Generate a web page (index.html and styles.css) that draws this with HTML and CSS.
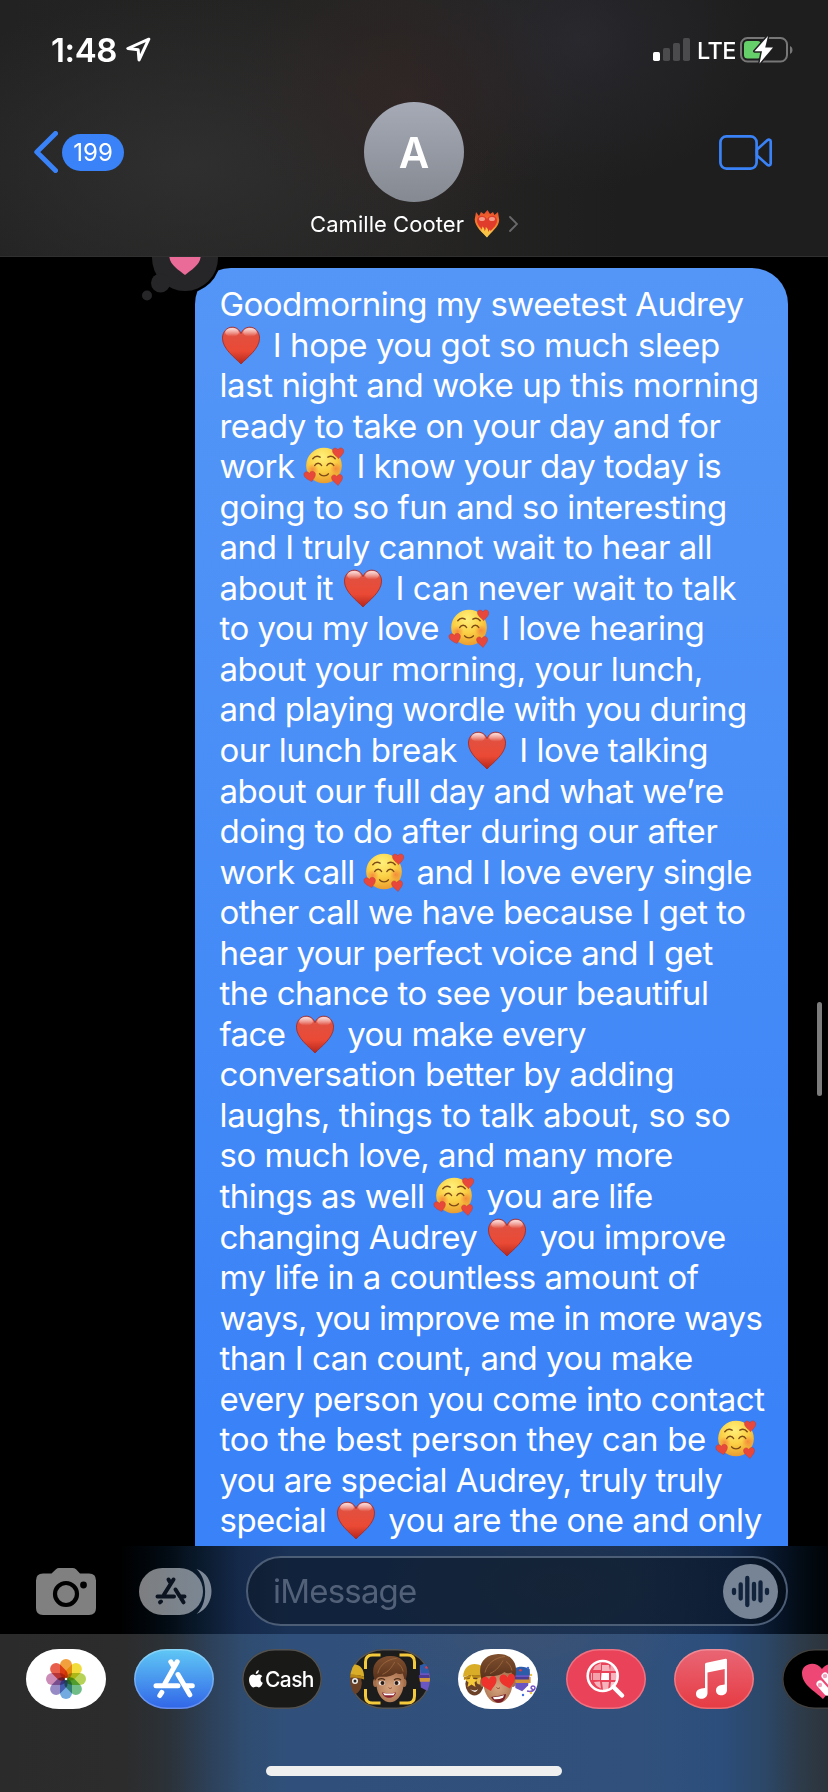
FILE: index.html
```html
<!DOCTYPE html>
<html lang="en">
<head>
<meta charset="utf-8">
<title>Messages</title>
<link rel="stylesheet" href="styles.css">
</head>
<body>
<svg class="defs" aria-hidden="true">
  <defs>
    <linearGradient id="heartFill" x1="0" y1="0" x2="0" y2="1">
      <stop offset="0" stop-color="#f08a80"/><stop offset=".22" stop-color="#e2503f"/><stop offset=".65" stop-color="#ea4a35"/><stop offset="1" stop-color="#b5261b"/>
    </linearGradient>
    <linearGradient id="shine" x1="0" y1="0" x2="0" y2="1"><stop offset="0" stop-color="#fff" stop-opacity=".75"/><stop offset="1" stop-color="#fff" stop-opacity="0"/></linearGradient>
    <radialGradient id="faceFill" cx=".45" cy=".25" r=".8">
      <stop offset="0" stop-color="#fff07a"/><stop offset=".5" stop-color="#fbd045"/><stop offset="1" stop-color="#e9952c"/>
    </radialGradient>
    <radialGradient id="blush"><stop offset="0" stop-color="#f4683a" stop-opacity=".6"/><stop offset="1" stop-color="#f4683a" stop-opacity="0"/></radialGradient>
    <linearGradient id="flame" x1="0" y1="0" x2="0" y2="1"><stop offset="0" stop-color="#e8472c"/><stop offset=".6" stop-color="#f58a2d"/><stop offset="1" stop-color="#fde063"/></linearGradient>
    <linearGradient id="hair" x1="0" y1="0" x2="0" y2="1"><stop offset="0" stop-color="#80502f"/><stop offset="1" stop-color="#56301a"/></linearGradient>
    <radialGradient id="skin" cx=".5" cy=".5" r=".6"><stop offset="0" stop-color="#d9a581"/><stop offset="1" stop-color="#a8714d"/></radialGradient>
    <symbol id="heart" viewBox="0 0 40 40">
      <path d="M20 39C14 32.500 1 23.500 1 12.500 1 6 5.500 1.200 11 1.200c4.300 0 7.500 2.600 9 6.600 1.500-4 4.700-6.600 9-6.600 5.500 0 10 4.800 10 11.300C39 23.500 26 32.500 20 39z" fill="url(#heartFill)" stroke="#a52a24" stroke-width=".9"/>
      <ellipse cx="10.800" cy="6.500" rx="7" ry="4.500" fill="url(#shine)"/>
      <ellipse cx="29.200" cy="6.500" rx="7" ry="4.500" fill="url(#shine)"/>
    </symbol>
    <symbol id="love" viewBox="0 0 42 40">
      <circle cx="21" cy="19" r="18.300" fill="url(#faceFill)"/>
      <circle cx="9.500" cy="23" r="6" fill="url(#blush)"/><circle cx="33" cy="22" r="6" fill="url(#blush)"/>
      <path d="M9.500 12c2-2.500 5-3 7.500-1.500M25 10.500c2.500-1.500 5.500-1 7.500 1.500M11.500 19c1.500-3 5.500-3 7 0M24 19c1.500-3 5.500-3 7 0M16.500 27.500c2 2.800 7 2.800 9 0" fill="none" stroke="#7c4a17" stroke-width="1.500" stroke-linecap="round"/>
      <g fill="#e8483c" stroke="#b8332b" stroke-width=".4">
        <path d="M36 12C33 9 29.500 7 29.700 3.700 30 .5 34 .3 35.200 3 36.800-.5 41.500.800 41.200 4.300 41 7.500 38 9.500 36 12z"/>
        <path d="M8.500 35.500C5 33.500.500 32 .400 28.300.500 25 4.500 24.500 6 27.200 7 23.700 12 24.500 12.200 28 12.300 31 9.800 33 8.500 35.500z"/>
        <path d="M35.500 39.500C32.500 36.500 28.700 34.500 28.700 31.300 29 28 32.700 27.700 34.200 30.500 35.500 27 40 27.700 40 31.300 40 34.500 37 36.700 35.500 39.500z"/>
      </g>
    </symbol>
    <symbol id="store" viewBox="0 0 80 60">
      <g fill="none" stroke="currentColor" stroke-width="5" stroke-linecap="round">
        <path d="M43.200 12.800 31 34.500M36.800 12.800l3 5"/>
        <path d="M22 36.700h22M52 36.700h6.300M27.800 43.300l-2 3.200"/>
        <path d="M44 25.500 55.800 45.800"/>
      </g>
    </symbol>
    <symbol id="friendYellow" viewBox="0 0 26 34">
      <ellipse cx="13" cy="21" rx="9.500" ry="12" fill="#6b4228"/>
      <path d="M1 14C2 2 10-1 17 1c6 2 8 7 8 13-7-3-17-3-24 0z" fill="#d9ad28"/>
      <path d="M2 14c7-3 16-3 23 0v3c-7-3-16-3-23 0z" fill="#b98917"/>
    </symbol>
    <symbol id="friendBlue" viewBox="0 0 26 30">
      <path d="M3 2h17l1 7-2 13-7 7-8-4-1-14z" fill="#6a56c2"/>
      <path d="M3 2C7-1 17-1 21 3v7H4z" fill="#2c5ba8"/><circle cx="10" cy="4" r="1.500" fill="#e43b43"/>
      <path d="M2 12h20v7H3z" fill="#d1953b"/><path d="M2 12h18v3H2z" fill="#4d3a93"/>
    </symbol>
    <symbol id="boy" viewBox="0 0 40 52">
      <ellipse cx="4.500" cy="29" rx="2.500" ry="4.500" fill="#a66f4c"/><ellipse cx="35" cy="29" rx="2.500" ry="4.500" fill="#a66f4c"/>
      <path d="M5 18c0 15 1 21 6 27 5 6 13 6 18 0 5-6 6-12 6-27z" fill="url(#skin)"/>
      <path d="M4 27C-2 10 7 1 20 .500 33 0 42 10 36.500 26c-1.500-2-2-4-3-7-3 1-5 1-7-.500-4 3.500-11 4.500-17 4-2 0-4 1.500-5.500 4.500z" fill="url(#hair)"/>
      <path d="M7 19C9 10 17 4 27 3M12 20c7-3 10-8 13-13M28 8c3 2 5 5 6 9" fill="none" stroke="#9c6840" stroke-width=".9"/>
      <path d="M18.500 34c1 1.300 2.500 1.300 3.500 0" fill="none" stroke="#85492e" stroke-width="1"/>
    </symbol>
  </defs>
</svg>

<header class="header">
  <div class="status">
    <span class="time">1:48</span>
    <svg class="locate" viewBox="0 0 25 25"><path d="M22.800 2.200 1.800 11.500 12.200 12.800 13 23z" fill="none" stroke="#fff" stroke-width="3" stroke-linejoin="round"/></svg>
    <div class="status-right">
      <svg class="signal" viewBox="0 0 37 23"><rect y="14" width="7" height="9" rx="1.700" fill="#fff"/><g fill="#4b4b4e"><rect x="10" y="10" width="7" height="13" rx="1.700"/><rect x="20" y="5" width="7" height="18" rx="1.700"/><rect x="30" width="7" height="23" rx="1.700"/></g></svg>
      <span class="lte">LTE</span>
      <svg class="battery" viewBox="0 0 54 28">
        <rect x="1" y="2" width="46" height="23.500" rx="6.500" fill="none" stroke="#777" stroke-width="2"/>
        <path d="M50 10v8c3.300-1.200 3.300-6.800 0-8z" fill="#777"/>
        <rect x="4" y="5" width="17" height="17.500" rx="3.500" fill="#65cf69"/>
        <path d="M28 0 14.500 15.200h7.500L19.500 27.500 33 11.500h-7.800z" fill="#fff" stroke="#202022" stroke-width="3" stroke-linejoin="round" paint-order="stroke"/>
      </svg>
    </div>
  </div>
  <div class="nav">
    <div class="back">
      <svg class="back-arrow" viewBox="0 0 24 42"><path d="M21.500 2.500 2.800 21 21.500 39.500" fill="none" stroke="#3a82f7" stroke-width="5" stroke-linecap="round" stroke-linejoin="round"/></svg>
      <span class="count">199</span>
    </div>
    <div class="contact">
      <div class="avatar">A</div>
      <div class="name"><span>Camille Cooter</span>
        <svg class="fire" viewBox="0 0 26 28"><path d="M13 27.500C9 23 1 17 .700 9.500L2 2l3 4 2-4 3 2 3.500-4L16 4l3-2 1.500 3L24 2l1.200 8C25 17 17 22 13 27.500z" fill="url(#flame)"/><path d="M13 24C9 20 3 16 3 10.500 3 5 10 4 13 9c3-5 10-4 10 1.500C23 16 17 20 13 24z" fill="#df3c2b"/><ellipse cx="8" cy="9" rx="3" ry="2" fill="#f39a86"/><ellipse cx="18" cy="9" rx="3" ry="2" fill="#f39a86"/><path d="M7 21c1-1.500 1.500-3 1.200-4.500 1.800 1 2.300 2.500 2.300 4.500 1-1 1.500-2.500 1.200-4 2 1.200 2.800 3 2.300 5l2-2.500.5 2-3.500 5z" fill="#fbc343"/></svg>
        <svg class="chev" viewBox="0 0 9 16"><path d="M1 1l7 7-7 7" fill="none" stroke="#69696b" stroke-width="1.800" stroke-linecap="round"/></svg>
      </div>
    </div>
    <svg class="video" viewBox="0 0 54 36"><g fill="none" stroke="#3a82f7" stroke-width="2.700" stroke-linejoin="round"><rect x="1.400" y="1.400" width="36.200" height="32.200" rx="6"/><path d="M38 14.500 48.300 5.300c1.500-1.200 3.400-.700 3.400 1.200v22c0 1.900-1.900 2.400-3.400 1.200L38 20.500z"/></g></svg>
  </div>
</header>

<main class="chat">
  <div class="bubble">
    <div class="line" data-w="524">Goodmorning my sweetest Audrey</div>
    <div class="line" data-w="500.3"><svg class="emo"><use href="#heart"/></svg> I hope you got so much sleep</div>
    <div class="line" data-w="539.3">last night and woke up this morning</div>
    <div class="line" data-w="501">ready to take on your day and for</div>
    <div class="line" data-w="501.7">work <svg class="emo"><use href="#love"/></svg> I know your day today is</div>
    <div class="line" data-w="507.3">going to so fun and so interesting</div>
    <div class="line" data-w="492.5">and I truly cannot wait to hear all</div>
    <div class="line" data-w="516.8">about it <svg class="emo"><use href="#heart"/></svg> I can never wait to talk</div>
    <div class="line" data-w="484.7">to you my love <svg class="emo"><use href="#love"/></svg> I love hearing</div>
    <div class="line" data-w="483.3">about your morning, your lunch,</div>
    <div class="line" data-w="527.3">and playing wordle with you during</div>
    <div class="line" data-w="488.7">our lunch break <svg class="emo"><use href="#heart"/></svg> I love talking</div>
    <div class="line" data-w="504.3">about our full day and what we’re</div>
    <div class="line" data-w="498">doing to do after during our after</div>
    <div class="line" data-w="532.3">work call <svg class="emo"><use href="#love"/></svg> and I love every single</div>
    <div class="line" data-w="526">other call we have because I get to</div>
    <div class="line" data-w="493.3">hear your perfect voice and I get</div>
    <div class="line" data-w="489">the chance to see your beautiful</div>
    <div class="line" data-w="366.5">face <svg class="emo"><use href="#heart"/></svg> you make every</div>
    <div class="line" data-w="454.5">conversation better by adding</div>
    <div class="line" data-w="511">laughs, things to talk about, so so</div>
    <div class="line" data-w="453.3">so much love, and many more</div>
    <div class="line" data-w="433.3">things as well <svg class="emo"><use href="#love"/></svg> you are life</div>
    <div class="line" data-w="506.3">changing Audrey <svg class="emo"><use href="#heart"/></svg> you improve</div>
    <div class="line" data-w="479">my life in a countless amount of</div>
    <div class="line" data-w="542.7">ways, you improve me in more ways</div>
    <div class="line" data-w="473.3">than I can count, and you make</div>
    <div class="line" data-w="545">every person you come into contact</div>
    <div class="line" data-w="537.5">too the best person they can be <svg class="emo"><use href="#love"/></svg></div>
    <div class="line" data-w="502.7">you are special Audrey, truly truly</div>
    <div class="line" data-w="542.3">special <svg class="emo"><use href="#heart"/></svg> you are the one and only</div>
  </div>
  <svg class="tapback" viewBox="0 0 80 46">
    <circle cx="45" cy="1" r="35.500" fill="#000"/>
    <g fill="#262628"><circle cx="45" cy="1" r="33"/><circle cx="20.500" cy="26" r="9.500"/><circle cx="7" cy="38.500" r="5"/></g>
    <path d="M29.300-1C29.500 8 39 13 45 18 51 13 60.500 8 60.700-1z" fill="#ea6a98"/>
  </svg>
  <div class="scrollbar"></div>
</main>

<section class="compose">
  <svg class="camera" viewBox="0 0 60 47"><path d="M7 5.500h8.500L20 1.300Q21.300 0 23 0h13.500Q38.500 0 40 1.300L44 5.500H53q7 0 7 7V40q0 7-7 7H7q-7 0-7-7V12.500q0-7 7-7z" fill="#808080"/><circle cx="30" cy="26" r="11" fill="none" stroke="#000" stroke-width="4.200"/><circle cx="47.500" cy="17" r="3.400" fill="#000"/></svg>
  <svg class="apps-toggle" viewBox="0 0 73 47">
    <defs><linearGradient id="pill"><stop offset="0" stop-color="#7d7e80"/><stop offset="1" stop-color="#7b8794"/></linearGradient></defs>
    <path d="M57.500 1C77 7 78 38 57.500 46 69 36 69 11 57.500 1z" fill="#7e8998"/>
    <rect width="64" height="47" rx="23.500" fill="url(#pill)"/>
    <g fill="none" stroke="#0b1420" stroke-width="4" stroke-linecap="round"><path d="M34.500 11.500 25 26.500M29.500 11.500l2 3.500M18.500 28.500H35M41 28.500h4.500M22 33.500l-1 .800M36.500 21.500l8 12.800"/></g>
  </svg>
  <div class="field"><span>iMessage</span>
    <svg class="voice" viewBox="0 0 55 55"><circle cx="27.500" cy="27.500" r="27.500" fill="#778496"/><path d="M11 26v3M17.700 20.500v14M24.300 14v27M31 20v15M37.500 18.500v18M44 26v3" fill="none" stroke="#12233c" stroke-width="4.300" stroke-linecap="round"/></svg>
  </div>
</section>

<footer class="drawer">
  <div class="strip">
    <div class="app white"><svg viewBox="0 0 80 60"><g class="petals">
      <rect x="34" y="10" width="12" height="20" rx="6" fill="#f2a03d"/>
      <rect x="34" y="10" width="12" height="20" rx="6" fill="#f1dc3b" transform="rotate(45 40 30)"/>
      <rect x="34" y="10" width="12" height="20" rx="6" fill="#b6d357" transform="rotate(90 40 30)"/>
      <rect x="34" y="10" width="12" height="20" rx="6" fill="#70bd87" transform="rotate(135 40 30)"/>
      <rect x="34" y="10" width="12" height="20" rx="6" fill="#73abe1" transform="rotate(180 40 30)"/>
      <rect x="34" y="10" width="12" height="20" rx="6" fill="#978bc5" transform="rotate(225 40 30)"/>
      <rect x="34" y="10" width="12" height="20" rx="6" fill="#cb8db8" transform="rotate(270 40 30)"/>
      <rect x="34" y="10" width="12" height="20" rx="6" fill="#e8604c" transform="rotate(315 40 30)"/>
    </g><circle cx="40" cy="30" r="1.300" fill="#fff"/></svg></div>
    <div class="app store"><svg><use href="#store"/></svg></div>
    <div class="app cash"><svg class="apple" viewBox="0 0 14 18"><path d="M10 4.500c-1.500 0-2 .800-3 .800s-1.800-.800-3.200-.800C1.500 4.600 0 6.800 0 9.700 0 13.500 2.500 17.500 4.400 17.500c1.100 0 1.500-.700 2.800-.700s1.600.700 2.700.700c1.700 0 3.200-2.500 3.900-4.700C10.800 11.500 11 7.500 13.300 6.300 12.500 5.100 11.200 4.500 10 4.500zM9.800 0C8 .300 6.500 2 6.800 4 8.700 4 10 2 9.800 0z" fill="#fff"/></svg><span>Cash</span></div>
    <div class="app dark"><svg viewBox="0 0 80 60">
      <use href="#friendYellow" x="-9" y="13" width="24" height="35"/><circle cx="5" cy="32" r="3" fill="#eee"/><circle cx="5" cy="32" r="1.500" fill="#222"/>
      <use href="#friendBlue" x="67" y="13" width="25" height="32"/>
      <use href="#boy" x="21" y="6.500" width="38" height="49"/>
      <path d="M28 31c2-1.500 5-1.500 7 0M44 31c2-1.500 5-1.500 7 0" stroke="#513019" stroke-width="1.200" fill="none"/>
      <ellipse cx="32" cy="34" rx="3.200" ry="2.300" fill="#f6eee8"/><ellipse cx="47" cy="34" rx="3.200" ry="2.300" fill="#f6eee8"/><circle cx="32.500" cy="34" r="2" fill="#2b1a12"/><circle cx="46.500" cy="34" r="2" fill="#2b1a12"/>
      <path d="M32 43.500q7.500 1.500 14 0c-1.500 7-12.500 7-14 0z" fill="#8c2330"/><path d="M33 44q6.500 1 12 0l-1.500 2.300h-9z" fill="#fff"/>
      <path d="M15.500 20v-7q0-7 7-7h8M49.500 6h8q7 0 7 7v7M64.500 40v7q0 7-7 7h-8M30.500 54h-8q-7 0-7-7v-7" fill="none" stroke="#f5c93c" stroke-width="3"/>
    </svg></div>
    <div class="app white"><svg viewBox="0 0 80 60">
      <use href="#friendYellow" x="4" y="14" width="25" height="34"/><path d="m13.500 26 2 4 4.500.500-3.500 3 1 4.500-4-2.500-4 2.500 1-4.500-3.500-3 4.500-.500z" fill="#f7ca39"/><circle cx="22" cy="32" r="3.500" fill="#e7bc47"/><path d="M12 40q5 3 8 0-2 6-8 0z" fill="#fff"/>
      <use href="#friendBlue" x="54" y="16" width="22" height="29"/><path d="M69 42c8 2 10-5 6-5-3 0-2 4 0 3" fill="none" stroke="#7653c4" stroke-width="1.500"/>
      <g fill="#f2c43c"><circle cx="73" cy="26" r="1.200"/><circle cx="73" cy="44" r="1.200"/></g><g fill="#3e6ce5"><circle cx="70" cy="19" r="1.200"/><circle cx="65" cy="46" r="1.200"/></g>
      <use href="#boy" x="20" y="4.500" width="40" height="52"/>
      <path d="M33 48q9-1 15-3c-1 10-10 12-15 3z" fill="#792129"/><path d="M35 48.200q7-.500 11-2l-1 2.500q-4 2-9 1.500z" fill="#fff"/>
      <g fill="#ed332b"><path d="M33 42C28 39 23 37 23.200 31.700 24 27 29 26.500 31 30.500 32.500 25.500 38.500 25.700 38.500 31 38.500 36 34.500 38 33 42z"/><path d="M52 39.500C47 37 41.500 34.500 41.500 29.500 42 24.500 48 24.500 49.500 28.500 51 23.500 56.500 23.700 57 28.500 57 33.500 53.500 36 52 39.500z"/></g>
    </svg></div>
    <div class="app search"><svg viewBox="0 0 80 60">
      <g fill="#fff"><path opacity=".5" d="M29 17l6-3v7h-8zM45 14l5 4 1 4h-7zM27 24h7v7h-7z"/><path opacity=".6" d="M36 16h7l1 6h-8zM45 24h6v7h-6zM28 33l6-.500 1 7q-5-2-7-6.500zM36 33h7l-1 8h-5z"/><path d="M35.500 24h7.500v7h-8z"/><path opacity=".7" d="M45 33h6l-3 5-4 2z"/><path opacity=".6" d="M25 24h1v7h-1z"/></g>
      <circle cx="36.700" cy="27" r="15" fill="none" stroke="#fff" stroke-width="2.600"/><path d="m47.500 38 8.500 8.500" stroke="#fff" stroke-width="4.500" stroke-linecap="round"/>
    </svg></div>
    <div class="app music"><svg viewBox="0 0 80 60"><path d="M31 15.500Q31 14 32.500 13.700L51.500 9.800Q53 9.600 53 11V41c0 7-11 7-11 .500 0-5 5-5.500 8.700-6V20L33.500 23.500V44c0 7.500-11.500 7.500-11.500 1 0-4.500 4-5.500 9-6z" fill="#fff"/></svg></div>
    <div class="app black"><svg viewBox="0 0 80 60"><path d="M41 50C33 42 20 36 20 24c0-10 14-13 20-4 6-9 20-5 20 4 0 12-13 18-19 26z" fill="#ee4775"/><path d="m38 35 7 8M43 27l8 9" stroke="#fff" stroke-width="7" stroke-linecap="round"/><circle cx="38" cy="36" r="2.200" fill="#f3a2bd"/><circle cx="43" cy="27" r="2.200" fill="#f3a2bd"/></svg></div>
  </div>
  <div class="home"></div>
</footer>
<script src="fit.js"></script>
</body>
</html>
```
FILE: fit.js
```js
// Track each line of the message so that it fills its typeset width.
document.querySelectorAll('.line').forEach(function (line) {
  var range = document.createRange();
  range.selectNodeContents(line);
  var width = range.getBoundingClientRect().width;
  var count = line.textContent.length;
  line.style.letterSpacing = ((parseFloat(line.dataset.w) - width) / count).toFixed(3) + 'px';
});
```
FILE: styles.css
```css
* { box-sizing: border-box; }
body { margin: 0; width: 828px; height: 1792px; background: #000; color: #fff; font-family: Inter, "Liberation Sans", sans-serif; display: flex; flex-direction: column; overflow: hidden; }
svg { display: block; }
.defs { position: absolute; width: 0; height: 0; }

.header { height: 257px; flex: none; border-bottom: 1px solid #303031; background:
  radial-gradient(ellipse 170px 130px at 405px 95px, rgba(54,38,37,.55), rgba(54,38,37,0)),
  radial-gradient(ellipse 180px 150px at 580px 40px, rgba(44,44,52,.7), rgba(44,44,52,0)),
  radial-gradient(ellipse 300px 170px at 190px 165px, #2f2f2f, rgba(47,47,47,0)),
  linear-gradient(90deg, #222 0, #262524 50%, #1e1e1e 75%, #1e1e1e 100%); }
.status { height: 102px; padding: 0 34px 0 51px; display: flex; align-items: flex-start; }
.time { font-size: 33px; font-weight: 600; line-height: 40px; margin-top: 30px; width: 75px; letter-spacing: -.4px; }
.locate { width: 25px; height: 25px; margin-top: 37px; }
.status-right { margin-left: auto; display: flex; align-items: flex-start; }
.signal { width: 37px; height: 23px; margin-top: 38px; }
.lte { font-size: 23.5px; font-weight: 500; line-height: 28px; margin: 37px 0 0 7px; width: 43px; letter-spacing: -.6px; }
.battery { width: 54px; height: 28px; margin-top: 36px; }
.nav { height: 154px; display: grid; grid-template-columns: 1fr 300px 1fr; }
.back { display: flex; align-items: flex-start; padding: 29px 0 0 34px; gap: 4px; }
.back-arrow { width: 24px; height: 42px; }
.count { width: 62px; height: 37px; border-radius: 19px; background: #3a82f7; font-size: 24px; line-height: 37px; text-align: center; margin-top: 3px; }
.contact { display: flex; flex-direction: column; align-items: center; }
.avatar { width: 100px; height: 100px; border-radius: 50%; background: linear-gradient(#a5aab6, #858991); font-size: 42px; font-weight: 600; line-height: 102px; text-align: center; }
.name { display: flex; align-items: center; font-size: 22px; height: 28px; margin-top: 8px; letter-spacing: .05px; white-space: nowrap; }
.fire { width: 26px; height: 28px; margin-left: 10px; }
.chev { width: 9px; height: 16px; margin-left: 9px; }
.video { width: 54px; height: 36px; margin: 33px 55px 0 0; justify-self: end; }

.chat { flex: none; height: 1289px; position: relative; overflow: hidden; }
.bubble { margin: 11px 40px 0 195px; height: 1400px; padding: 16px 0 0 24.500px; border-radius: 36px; background: linear-gradient(#5496f7, #4a8ff7 480px, #3a82f7 1150px); font-size: 33px; line-height: 40.560px; }
.line { height: 40.560px; white-space: nowrap; }
.emo { display: inline-block; width: 42px; height: 39px; margin-right: 2.500px; vertical-align: -8px; }
.tapback { position: absolute; left: 140px; top: 0; width: 80px; height: 46px; }
.scrollbar { position: absolute; right: 6px; top: 745px; width: 5px; height: 94px; border-radius: 3px; background: #7c7c7c; }

.compose { flex: none; height: 88px; display: flex; align-items: center; padding: 0 40px 2px 36px; background:
  radial-gradient(ellipse 180px 90px at 560px 40px, rgba(34,51,75,.7), rgba(34,51,75,0)),
  linear-gradient(90deg, #000 0, #000 120px, #020a12 165px, #0a1a2c 200px, #15294a 240px, #1a3256 290px, #1a3256 640px, #13294b 730px, #08162a 775px, #020a12 805px, #000306 828px); }
.camera { width: 60px; height: 47px; margin-top: 5px; }
.apps-toggle { width: 73px; height: 47px; margin: 5px 0 0 43px; }
.field { margin: 4px 0 0 34px; width: 542px; height: 70px; border: 2px solid #4c5d76; border-radius: 35px; background: rgba(3,9,12,.35); display: flex; align-items: center; justify-content: space-between; padding: 0 8px 0 25px; font-size: 33px; letter-spacing: -.8px; color: #536178; }
.voice { width: 55px; height: 55px; }

.drawer { flex: none; height: 158px; padding-top: 15px; background:
  radial-gradient(ellipse 160px 60px at 520px 0, rgba(66,82,110,.6), rgba(66,82,110,0)),
  linear-gradient(90deg, #2b2b2b 0, #2c2c2c 125px, #2b3239 170px, #2d4058 208px, #2f4c70 245px, #30507b 290px, #31517c 640px, #2c4e7c 720px, #2c4767 765px, #2d3b4a 800px, #2c343b 828px); }
.strip { display: flex; gap: 28px; padding-left: 26px; overflow: hidden; }
.app { flex: none; width: 80px; height: 60px; border-radius: 33px / 30px; overflow: hidden; box-shadow: inset 0 0 0 1.500px rgba(255,255,255,.25); }
.app > svg { width: 80px; height: 60px; }
.white { background: #fff; }
.petals rect { mix-blend-mode: multiply; }
.store { background: linear-gradient(#60c8f5, #3165e8); color: #fff; }
.cash { background: #191918; display: flex; align-items: center; padding-left: 7px; font-size: 21px; font-weight: 500; letter-spacing: -.6px; }
.cash .apple { width: 14px; height: 18px; margin: -1px 2px 0 0; }
.dark { background: #1c1c1c; }
.search { background: #ea4359; }
.music { background: linear-gradient(#e96675, #e63b43); }
.black { background: #000; }
.home { width: 296px; height: 10px; border-radius: 5px; background: #efefef; margin: 57px auto 0; }
```
